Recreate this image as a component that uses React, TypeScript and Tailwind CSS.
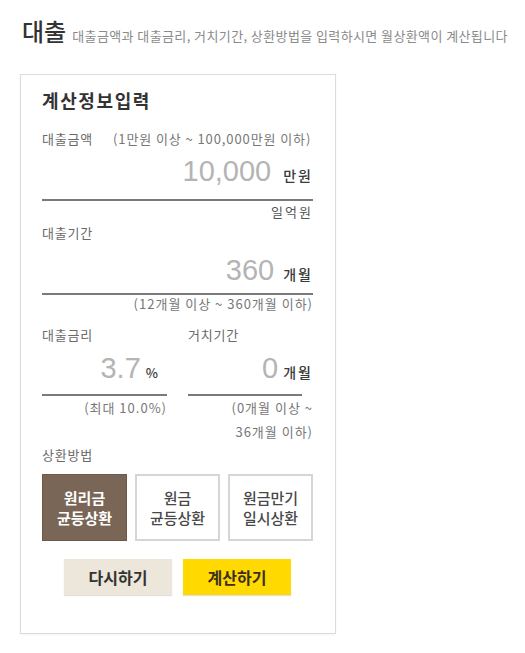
import React, { useState } from 'react';

const KR = "font-['Noto_Sans_CJK_KR',sans-serif]";
const NUM = "font-['Liberation_Sans','Noto_Sans_CJK_KR',sans-serif]";

function ValueRow({ value, unit, gap, unitClass = 'text-[14px] tracking-[2px]' }: { value: string, unit: string, gap: string, unitClass?: string }) {
    return (
        <div className="flex justify-end items-baseline h-[32px]">
            <span className={`${NUM} text-[29px] leading-[32px] text-[#b4b4b4]`}>{value}</span>
            <span className={`${KR} ${unitClass} ${gap} font-medium text-[#3a3a3a]`}>{unit}</span>
        </div>
    );
}

export default function App() {
    const [method, setMethod] = useState(0);
    const methods = [['원리금', '균등상환'], ['원금', '균등상환'], ['원금만기', '일시상환']];

    return (
        <div className={`w-[525px] h-[653px] bg-white ${KR}`}>
            <div className="flex items-baseline pt-[15px] pl-[22px]">
                <h1 className="text-[24px] leading-[32px] font-medium text-[#333]">대출</h1>
                <p className="ml-[6px] text-[13px] text-[#8a8a8a] tracking-[0.4px]">대출금액과 대출금리, 거치기간, 상환방법을 입력하시면 월상환액이 계산됩니다</p>
            </div>

            <div className="mt-[27px] ml-[20px] w-[316px] border border-[#dcdcdc] shadow-[0_1px_2px_rgba(0,0,0,0.05)] pt-[13px] pl-[21px] pr-[22px] pb-[38px]">
                <h2 className="text-[18px] leading-[24px] font-bold text-[#333] tracking-[1.6px]">계산정보입력</h2>

                <div className="mt-[19px] flex text-[13px] leading-[16px] text-[#6a6a6a]">
                    <span className="tracking-[0.8px]">대출금액</span>
                    <span className="ml-[20px] tracking-[0.9px] text-[#777]">(1만원 이상 ~ 100,000만원 이하)</span>
                </div>
                <div className="mt-[8px] pb-[12px] border-b-2 border-[#7a7a7a]">
                    <ValueRow value="10,000" unit="만원" gap="ml-[12px]" />
                </div>
                <div className="mt-[2px] text-right text-[13px] leading-[18px] tracking-[2px] text-[#555]">일억원</div>

                <div className="mt-[4px] text-[13px] leading-[16px] text-[#6a6a6a] tracking-[0.8px]">대출기간</div>
                <div className="mt-[13px] pb-[7px] border-b-2 border-[#7a7a7a]">
                    <ValueRow value="360" unit="개월" gap="ml-[9px]" />
                </div>
                <div className="mt-[1px] text-right text-[13px] leading-[16px] text-[#777] tracking-[1px]">(12개월 이상 ~ 360개월 이하)</div>

                <div className="mt-[15px] grid grid-cols-2 gap-x-[21px]">
                    <div>
                        <div className="text-[13px] leading-[16px] text-[#6a6a6a] tracking-[0.8px]">대출금리</div>
                        <div className="mt-[9px] pb-[10px] pr-[9px] border-b-2 border-[#7a7a7a]">
                            <ValueRow value="3.7" unit="%" gap="ml-[5px]" unitClass="text-[13px]" />
                        </div>
                        <div className="text-right text-[13px] leading-[24px] text-[#777] tracking-[1px]">(최대 10.0%)</div>
                    </div>
                    <div>
                        <div className="text-[13px] leading-[16px] text-[#6a6a6a] tracking-[0.8px]">거치기간</div>
                        <div className="mt-[9px] pb-[10px]">
                            <ValueRow value="0" unit="개월" gap="ml-[5px]" />
                        </div>
                        <div className="w-[114px] border-b-2 border-[#7a7a7a]" />
                        <div className="text-right text-[13px] leading-[24px] text-[#777] tracking-[1px]">
                            <div>(0개월 이상 ~</div>
                            <div>36개월 이하)</div>
                        </div>
                    </div>
                </div>

                <div className="mt-[3px] text-[13px] leading-[16px] text-[#6a6a6a] tracking-[0.8px]">상환방법</div>
                <div className="mt-[11px] grid grid-cols-3 gap-[8px]">
                    {methods.map((m, i) => (
                        <button
                            key={i}
                            onClick={() => setMethod(i)}
                            className={method === i
                                ? 'h-[67px] flex flex-col items-center justify-center bg-[#7a6656] border border-[#6c5949] text-white font-bold text-[15px] leading-[20px]'
                                : 'h-[67px] flex flex-col items-center justify-center bg-white border-2 border-[#d6d6d6] text-[#484848] font-medium text-[15px] leading-[20px]'}
                        >
                            <span>{m[0]}</span>
                            <span>{m[1]}</span>
                        </button>
                    ))}
                </div>

                <div className="mt-[18px] flex justify-center gap-[11px]">
                    <button className="w-[108px] h-[36px] bg-[#ece6db] text-[#333] font-bold text-[16px] shadow-[0_1px_1px_rgba(0,0,0,0.12)]">다시하기</button>
                    <button className="w-[108px] h-[36px] bg-[#ffd900] text-[#3d2f1e] font-bold text-[16px] shadow-[0_1px_1px_rgba(0,0,0,0.12)]">계산하기</button>
                </div>
            </div>
        </div>
    );
}
